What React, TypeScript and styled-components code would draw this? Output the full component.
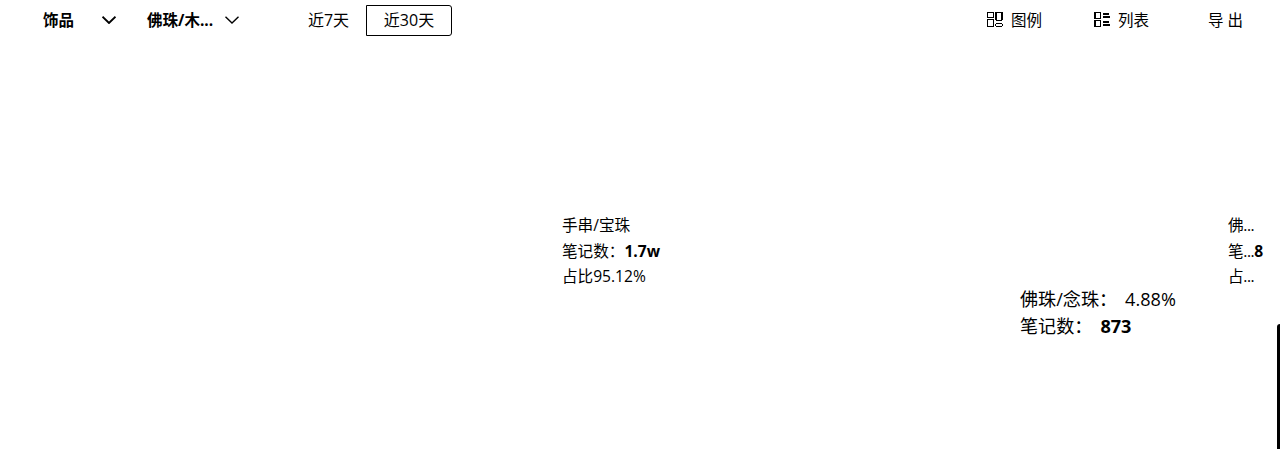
import React from "react";
import styled, { createGlobalStyle } from "styled-components";

const GlobalStyle = createGlobalStyle`
  * { box-sizing: border-box; }
  body {
    margin: 0;
    background: #fff;
    color: #000;
    font-family: "Open Sans", "Noto Sans CJK SC", sans-serif;
  }
`;

const Page = styled.div`
  position: relative;
  width: 1280px;
  height: 449px;
  overflow: hidden;
  display: flex;
  flex-direction: column;
`;

const Toolbar = styled.header`
  height: 40px;
  display: flex;
  align-items: center;
  padding: 0 33px 0 43px;
  font-size: 15.5px;
  line-height: 24px;
  white-space: nowrap;
`;

const Select = styled.div<{ $width: number; $offset?: number }>`
  width: ${(p) => p.$width}px;
  margin-left: ${(p) => p.$offset ?? 0}px;
  display: flex;
  align-items: center;
  justify-content: space-between;
  font-weight: 700;
`;

const Ranges = styled.div`
  display: flex;
  align-items: center;
  margin-left: 52px;
  font-size: 16px;
`;

const Range = styled.button<{ $width: number; $active?: boolean }>`
  width: ${(p) => p.$width}px;
  height: 31px;
  padding: 0;
  border: 1px solid ${(p) => (p.$active ? "#000" : "transparent")};
  border-radius: 0 3px 3px 0;
  background: none;
  color: inherit;
  font: inherit;
  line-height: 28px;
`;

const Actions = styled.div`
  display: flex;
  align-items: center;
  margin-left: auto;
`;

const Action = styled.div<{ $offset?: number; $spacing?: number }>`
  display: flex;
  align-items: center;
  gap: 8px;
  margin-left: ${(p) => p.$offset ?? 0}px;
  letter-spacing: ${(p) => p.$spacing ?? 0}px;
`;

const Chart = styled.main`
  flex: 1;
  display: flex;
  justify-content: space-between;
  padding: 173px 8px 0 562px;
`;

const Tile = styled.div<{ $width: number; $spacing?: number }>`
  width: ${(p) => p.$width}px;
  font-size: 15.6px;
  line-height: 25.5px;
  white-space: nowrap;
  letter-spacing: ${(p) => p.$spacing ?? 0}px;
`;

const Tooltip = styled.div`
  position: absolute;
  left: 1020px;
  top: 286px;
  font-size: 18.1px;
  line-height: 27px;
  white-space: nowrap;
`;

const TooltipRow = styled.div`
  display: flex;
  gap: 8px;
`;

const SidePanel = styled.aside`
  position: absolute;
  right: 0;
  bottom: 0;
  width: 3px;
  height: 125px;
  border-top-left-radius: 3px;
  background: #000;
`;

const Chevron = ({ bold }: { bold?: boolean }) => (
  <svg width="14" height="8" viewBox="0 0 14 8" fill="none" stroke="#000" strokeWidth={bold ? 1.9 : 1.4}>
    <path d="M.5 .7 7 7 13.5 .7" />
  </svg>
);

const LegendIcon = () => (
  <svg width="16" height="16" viewBox="0 0 16 16" fill="none" stroke="#000" shapeRendering="crispEdges">
    <path d="M.5 .5h6v5h-6zM.5 7.5h6v7h-6z" />
    <path d="M9 0v8M15 0v8" strokeWidth="2" />
    <path d="M9 .5h6M9 8.5h6" />
    <path d="M9 11.5h6M9 14.5h6M8.5 12v2M15.5 12v2" />
  </svg>
);

const ListIcon = () => (
  <svg width="16" height="16" viewBox="0 0 16 16" fill="none" stroke="#000" shapeRendering="crispEdges">
    <path d="M.5 .5h6v6h-6zM.5 8.5h6v6h-6z" />
    <path d="M1.5 1v5M1.5 9v5" />
    <path d="M9 2h6M9 5h7M9 10h6M9 13h7" strokeWidth="2" />
  </svg>
);

export default function App() {
  return (
    <>
      <GlobalStyle />
      <Page>
        <Toolbar>
          <Select $width={73}>饰品<Chevron bold /></Select>
          <Select $width={92} $offset={31}>佛珠/木...<Chevron /></Select>
          <Ranges>
            <Range $width={75}>近7天</Range>
            <Range $width={86} $active>近30天</Range>
          </Ranges>
          <Actions>
            <Action><LegendIcon />图例</Action>
            <Action $offset={52}><ListIcon />列表</Action>
            <Action $offset={59} $spacing={4}>导出</Action>
          </Actions>
        </Toolbar>
        <Chart>
          <Tile $width={110}>
            <div>手串/宝珠</div>
            <div>笔记数：<b>1.7w</b></div>
            <div>占比95.12%</div>
          </Tile>
          <Tile $width={44} $spacing={-0.4}>
            <div>佛...</div>
            <div>笔...<b>8</b></div>
            <div>占...</div>
          </Tile>
        </Chart>
        <Tooltip>
          <TooltipRow><span>佛珠/念珠：</span><span>4.88%</span></TooltipRow>
          <TooltipRow><span>笔记数：</span><b>873</b></TooltipRow>
        </Tooltip>
        <SidePanel />
      </Page>
    </>
  );
}
